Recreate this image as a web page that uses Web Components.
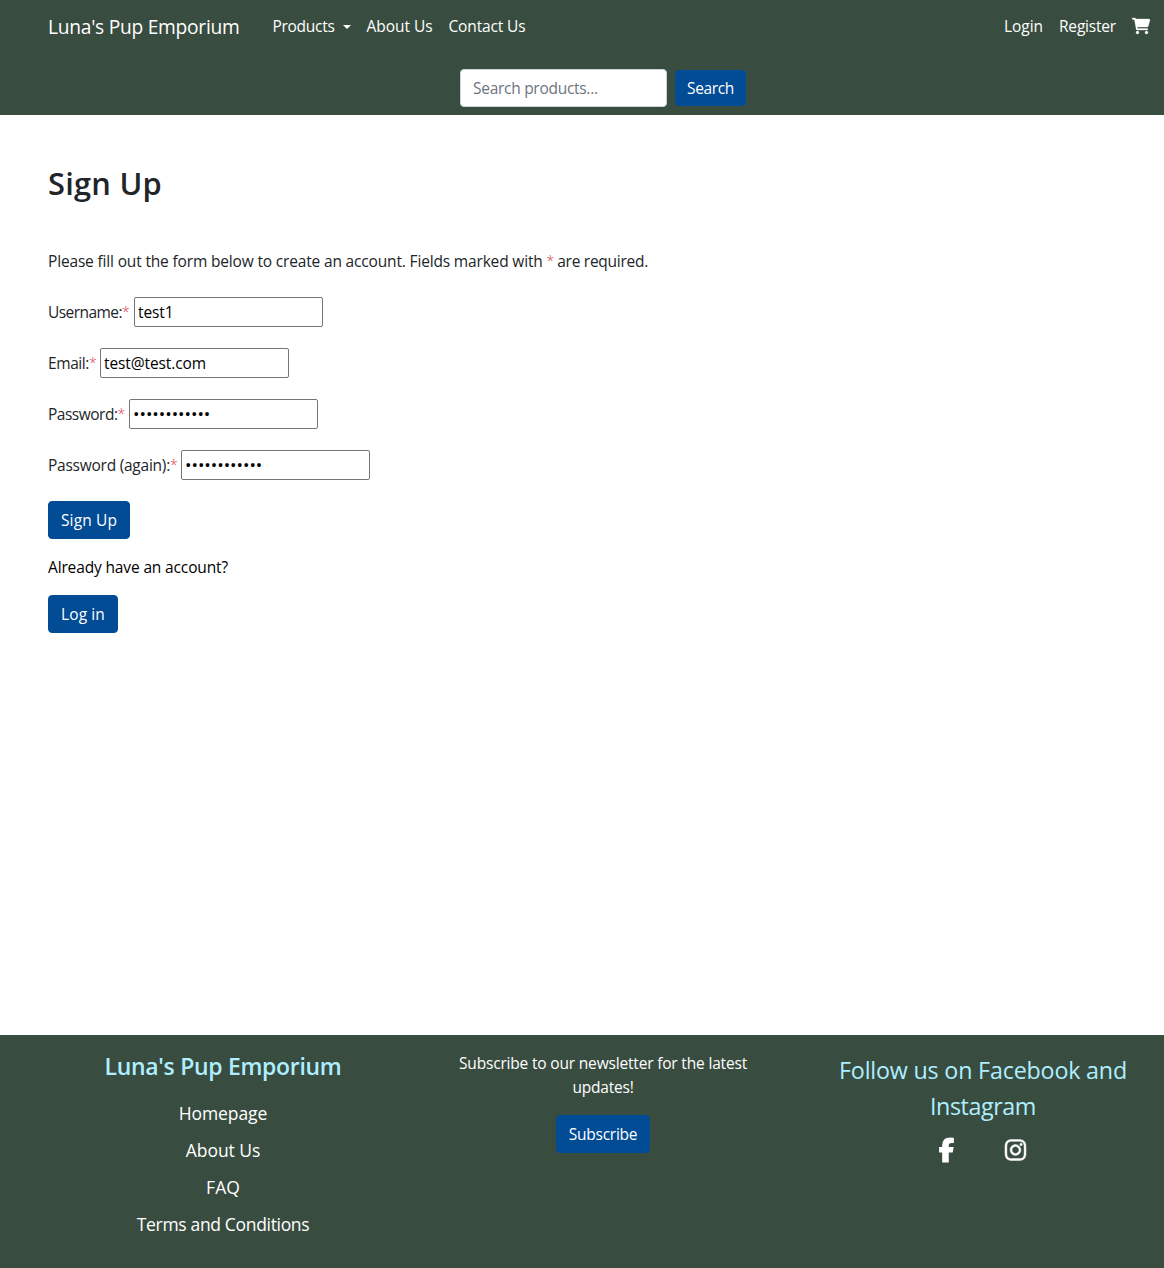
<!DOCTYPE html>
<html lang="en">
<head>
<meta charset="utf-8">
<title>Luna's Pup Emporium - Sign Up</title>
<style>
html,body{margin:0;background:#fff}
body{font-family:"Open Sans","Noto Sans",sans-serif;font-size:15.5px;line-height:24px;color:#212529;overflow:hidden}
</style>
</head>
<body>
<shop-page></shop-page>
<script>
const define = (name, html, init) => {
  const t = document.createElement('template');
  t.innerHTML = '<style>*{box-sizing:border-box}</style>' + html;
  customElements.define(name, class extends HTMLElement {
    constructor() {
      super();
      this.attachShadow({mode:'open'}).appendChild(t.content.cloneNode(true));
    }
    connectedCallback() { if (init) init(this, this.shadowRoot); }
  });
};

// One line of text tracked to a given advance width.
define('fit-text', `<style>:host{display:inline-block;white-space:nowrap;flex:none}span{display:inline-block}</style><span><slot></slot></span>`, (el, root) => {
  const w = +el.getAttribute('w'), s = root.querySelector('span');
  s.style.letterSpacing = '0';
  const n = el.textContent.length;
  s.style.letterSpacing = ((w - s.getBoundingClientRect().width) / n).toFixed(4) + 'px';
  el.style.width = w + 'px';
});

define('ui-button', `<style>
:host{display:block;flex:none}
button{display:block;font:inherit;color:#fff;background:#024b95;border:1px solid #024b95;border-radius:4px;padding:6px 12px;margin:0;white-space:nowrap}
:host([flat]) button{border:0}
</style><button type="button"><slot></slot></button>`);

define('ui-icon', `<style>:host{display:block;flex:none}svg{display:block;fill:#fff;stroke:#fff;stroke-width:10;overflow:visible}:host([name=facebook]) svg{stroke-width:22}</style><svg><path/></svg>`, (el, root) => {
  const icons = {
    cart:[576,'M96 0C107.5 0 117.4 8.19 119.6 19.51L121.1 32H541.8C562.1 32 578.3 52.25 572.6 72.66L518.6 264.7C514.7 278.5 502.1 288 487.8 288H170.7L179.9 336H488C501.3 336 512 346.7 512 360C512 373.3 501.3 384 488 384H159.1C148.5 384 138.6 375.8 136.4 364.5L76.14 48H24C10.75 48 0 37.25 0 24C0 10.75 10.75 0 24 0H96zM128 464C128 437.5 149.5 416 176 416C202.5 416 224 437.5 224 464C224 490.5 202.5 512 176 512C149.5 512 128 490.5 128 464zM512 464C512 490.5 490.5 512 464 512C437.5 512 416 490.5 416 464C416 437.5 437.5 416 464 416C490.5 416 512 437.5 512 464z'],
    facebook:[320,'M80 299.3V512H196V299.3h86.5l18-97.8H196V166.9c0-51.7 20.3-71.5 72.7-71.5c16.3 0 29.4 .4 37 1.2V7.9C291.4 4 256.4 0 236.2 0C129.3 0 80 50.5 80 159.4v42.1H14v97.8H80z'],
    instagram:[448,'M224.1 141c-63.6 0-114.9 51.3-114.9 114.9s51.3 114.9 114.9 114.9S339 319.5 339 255.9 287.7 141 224.1 141zm0 189.6c-41.1 0-74.7-33.5-74.7-74.7s33.5-74.7 74.7-74.7 74.7 33.5 74.7 74.7-33.6 74.7-74.7 74.7zm146.4-194.3c0 14.9-12 26.8-26.8 26.8-14.9 0-26.8-12-26.8-26.8s12-26.8 26.8-26.8 26.8 12 26.8 26.8zm76.1 27.2c-1.7-35.9-9.9-67.7-36.2-93.9-26.2-26.2-58-34.4-93.9-36.2-37-2.1-147.9-2.1-184.9 0-35.8 1.7-67.6 9.9-93.9 36.1s-34.4 58-36.2 93.9c-2.1 37-2.1 147.9 0 184.9 1.7 35.9 9.9 67.7 36.2 93.9s58 34.4 93.9 36.2c37 2.1 147.9 2.1 184.9 0 35.9-1.7 67.7-9.9 93.9-36.2 26.2-26.2 34.4-58 36.2-93.9 2.1-37 2.1-147.8 0-184.8zM398.8 388c-7.8 19.6-22.9 34.7-42.6 42.6-29.5 11.7-99.5 9-132.1 9s-102.7 2.6-132.1-9c-19.6-7.8-34.7-22.9-42.6-42.6-11.7-29.5-9-99.5-9-132.1s-2.6-102.7 9-132.1c7.8-19.6 22.9-34.7 42.6-42.6 29.5-11.7 99.5-9 132.1-9s102.7-2.6 132.1 9c19.6 7.8 34.7 22.9 42.6 42.6 11.7 29.5 9 99.5 9 132.1s2.7 102.7-9 132.1z']
  };
  const [w, d] = icons[el.getAttribute('name')], h = +el.getAttribute('size'), svg = root.querySelector('svg');
  svg.setAttribute('viewBox', `0 0 ${w} 512`);
  svg.setAttribute('height', h);
  svg.setAttribute('width', h * w / 512);
  root.querySelector('path').setAttribute('d', d);
});

define('form-field', `<style>
:host{display:flex;align-items:center;height:30px;margin-bottom:21px}
label{display:flex}
input{width:189px;height:30px;margin:0;padding:0 3px 1px;border:1px solid #767676;border-radius:2px;background:#fff;color:#000;font:inherit;outline:0;letter-spacing:-.1px}
input[type=password]{font-size:17.2px;letter-spacing:-.02px}
</style><label><slot></slot></label><input>`, (el, root) => {
  const i = root.querySelector('input');
  i.type = el.getAttribute('type') || 'text';
  i.value = el.getAttribute('value');
});

define('site-header', `<style>
:host{display:block;height:115px;background:#394c40;color:#fff}
nav{display:flex;align-items:center;height:53px;padding:0 14px 0 48px}
.brand{font-size:19.2px;margin-right:33px}
.links,.user{display:flex;gap:16px;align-items:center;height:24px;margin-top:-1px}
.user{margin-left:auto}
.drop{display:flex;align-items:center;gap:8px}
.drop::after{content:"";border:4px solid transparent;border-top-color:#fff;border-bottom:0;margin-top:1px}
form{display:flex;justify-content:center;align-items:center;gap:8px;padding:16px 0 0 42px}
input{width:207px;height:38px;border:1px solid #ced4da;border-radius:4px;padding:6px 12px;font:inherit;letter-spacing:-.28px;margin:0}
input::placeholder{color:#6c757d;opacity:1}
</style>
<nav><fit-text class="brand" w="191.5">Luna's Pup Emporium</fit-text>
<div class="links"><div class="drop"><fit-text w="62">Products</fit-text></div><fit-text w="66">About Us</fit-text><fit-text w="77">Contact Us</fit-text></div>
<div class="user"><fit-text w="39">Login</fit-text><fit-text w="57">Register</fit-text><ui-icon name="cart" size="16"></ui-icon></div></nav>
<form><input placeholder="Search products..."><ui-button flat><fit-text w="47">Search</fit-text></ui-button></form>`);

define('signup-form', `<style>
:host{display:block;padding:49px 48px 0;height:920px}
h1{margin:0 0 47px;font-size:30.8px;line-height:38px;font-weight:600}
p{margin:0;display:flex}
.intro{margin-bottom:24px}
.req{color:#dc3545;font-weight:300;font-size:14px}
.have{margin:16px 0;color:#000}
</style>
<h1><fit-text w="114">Sign Up</fit-text></h1>
<p class="intro"><fit-text w="498.5">Please fill out the form below to create an account. Fields marked with&nbsp;</fit-text><fit-text class="req" w="7">*</fit-text><fit-text w="94.5">&nbsp;are required.</fit-text></p>
<form-field value="test1"><fit-text w="74">Username:</fit-text><fit-text class="req" w="12">*</fit-text></form-field>
<form-field value="test@test.com"><fit-text w="41">Email:</fit-text><fit-text class="req" w="11">*</fit-text></form-field>
<form-field type="password" value="test12345678"><fit-text w="69.5">Password:</fit-text><fit-text class="req" w="11.5">*</fit-text></form-field>
<form-field type="password" value="test12345678"><fit-text w="122">Password (again):</fit-text><fit-text class="req" w="11">*</fit-text></form-field>
<ui-button><fit-text w="56">Sign Up</fit-text></ui-button>
<p class="have"><fit-text w="180">Already have an account?</fit-text></p>
<ui-button><fit-text w="44">Log in</fit-text></ui-button>`);

define('site-footer', `<style>
:host{display:flex;height:233px;background:#394c40;color:#fff;padding-left:33px}
section{flex:none;width:380px;display:flex;flex-direction:column;align-items:center}
h2{margin:0;font-size:23px;line-height:29px;font-weight:600;color:#aeefff;padding-top:17px}
.links{display:flex;flex-direction:column;align-items:center;gap:10px;font-size:17.5px;line-height:27px;margin-top:19px}
.news{padding-top:16px}
.news ui-button{margin-top:16px}
.social{font-size:23.3px;line-height:36px;color:#aeefff;padding-top:17px}
.icons{display:flex;gap:51px;margin:14px 1px 0 0}
</style>
<section><h2><fit-text w="237">Luna's Pup Emporium</fit-text></h2>
<div class="links"><fit-text w="88.5">Homepage</fit-text><fit-text w="74.5">About Us</fit-text><fit-text w="34">FAQ</fit-text><fit-text w="172.5">Terms and Conditions</fit-text></div></section>
<section class="news"><fit-text w="288">Subscribe to our newsletter for the latest</fit-text><fit-text w="61">updates!</fit-text><ui-button><fit-text w="68.5">Subscribe</fit-text></ui-button></section>
<section class="social"><fit-text w="288">Follow us on Facebook and</fit-text><fit-text w="106">Instagram</fit-text><div class="icons"><ui-icon name="facebook" size="24"></ui-icon><ui-icon name="instagram" size="24"></ui-icon></div></section>`);

define('shop-page', `<style>:host{display:block}</style><site-header></site-header><signup-form></signup-form><site-footer></site-footer>`);
</script>
</body>
</html>
